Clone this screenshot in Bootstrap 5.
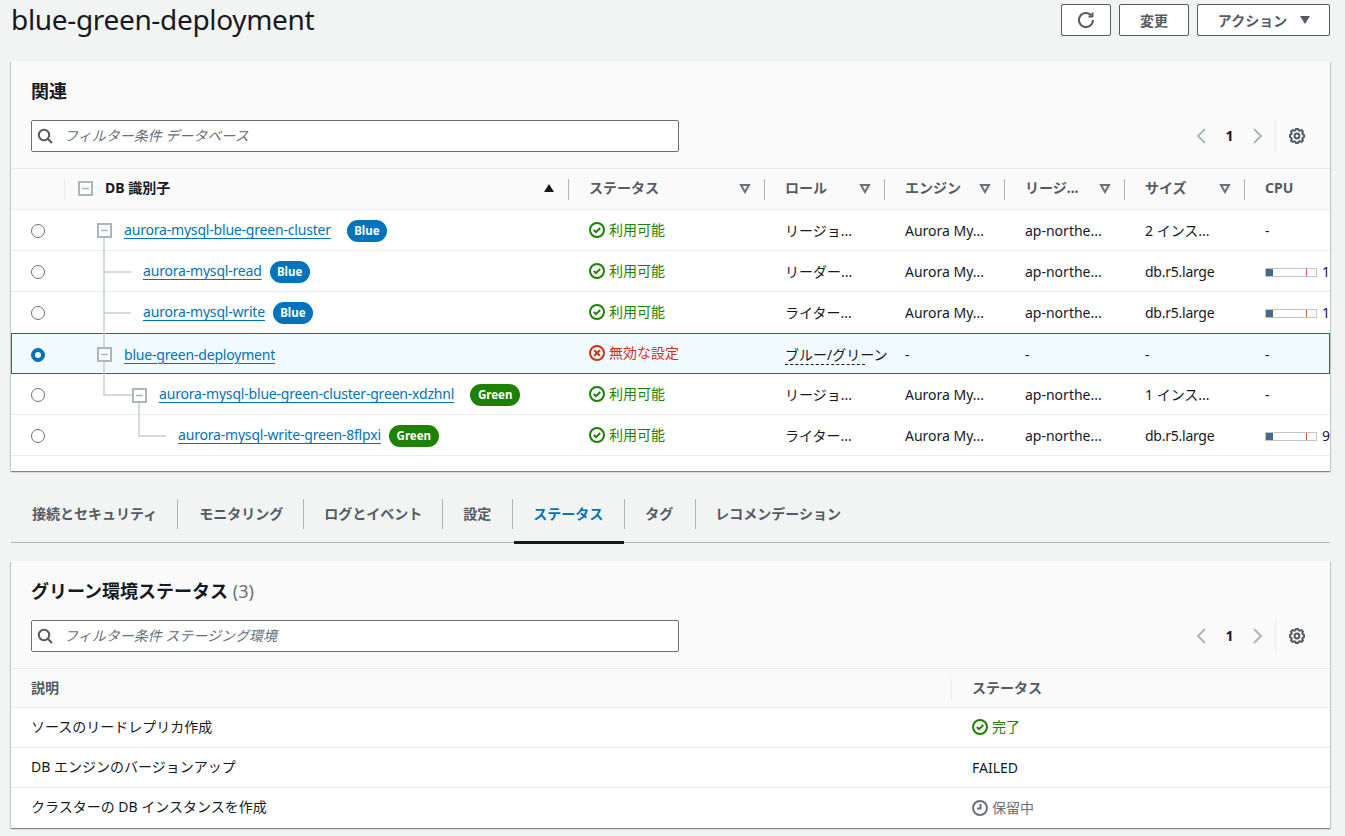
<!DOCTYPE html>
<html lang="ja">
<head>
<meta charset="utf-8">
<title>blue-green-deployment</title>
<link href="https://cdn.jsdelivr.net/npm/bootstrap@5.3.0/dist/css/bootstrap.min.css" rel="stylesheet">
<style>
:root { --ink:#16191f; --slate:#545b64; --mid:#687078; --line:#eaeded; --azure:#0073bb; --leaf:#1d8102; --fault:#d13212; }
html, body { height:836px; overflow:hidden; }
body { background:#f2f3f3; color:var(--ink); font-family:"Noto Sans","Noto Sans CJK JP",sans-serif; font-size:14px; line-height:20px; }
.shell { padding:4px 15px 0 11px; }
.page-head { height:32px; margin-bottom:25px; }
.page-title { font-size:28px; line-height:32px; font-weight:400; margin:-1px 0 0; color:var(--ink); letter-spacing:-.33px; }
.act-btn { height:32px; background:#fff; border:1px solid var(--slate); border-radius:2px; color:var(--slate); font-weight:700; font-size:14px; display:inline-flex; align-items:center; justify-content:center; gap:13px; padding:0; }
.act-btn:hover { background:#fff; color:var(--slate); border-color:var(--slate); }
.act-refresh { width:50px; }
.act-edit { width:70px; }
.act-menu { width:133px; padding-left:1px; }
.panel { border:0; border-radius:0; background:#fff; box-shadow:0 1px 1px rgba(0,28,36,.3),1px 1px 1px rgba(0,28,36,.15),-1px 1px 1px rgba(0,28,36,.15); overflow:hidden; }
.panel-top { background:#fafafa; padding:15px 20px 16px; height:107px; }
.panel-title { font-size:18px; line-height:30px; font-weight:700; margin:0 0 14px; color:var(--ink); }
.panel-count { font-weight:400; color:var(--mid); }
.filter-box { width:648px; height:32px; border:1px solid var(--mid); border-radius:2px; background:#fff; padding:0 5px; gap:11px; }
.filter-box input { border:0; outline:0; flex:1; background:transparent; padding:0; font-size:14px; font-style:italic; color:var(--ink); font-family:inherit; }
.filter-box input::placeholder { color:var(--mid); opacity:1; }
.pager { height:32px; margin-right:5px; }
.pager-num { width:39px; text-align:center; font-weight:700; }
.pager-prefs { border-left:1px solid var(--line); height:32px; margin-left:10px; padding-left:13px; }
.tree-wrap { position:relative; padding-bottom:15px; }
.tree-lines { position:absolute; left:0; top:0; pointer-events:none; }
.grid-tbl { table-layout:fixed; width:100%; margin:0; border-collapse:separate; border-spacing:0; }
.grid-tbl>:not(caption)>*>* { padding:2px 19px 0 21px; border-bottom:1px solid var(--line); box-shadow:none; background:transparent; color:var(--ink); vertical-align:middle; white-space:nowrap; overflow:hidden; height:41px; font-weight:400; }
.grid-tbl>thead>tr>th { background:#fafafa; border-top:1px solid var(--line); height:42px; font-weight:700; color:var(--slate); position:relative; padding:0 13px 2px 21px; overflow:visible; }
.grid-tbl>thead>tr>th.is-plain { overflow:hidden; }
.grid-tbl>thead>tr>th+th::before { content:""; position:absolute; left:0; top:10px; height:21px; border-left:1px solid #aab7b8; }
.grid-tbl>thead>tr>th.soft-rule::before { border-left-color:var(--line); }
.head-inner { display:flex; justify-content:space-between; align-items:center; gap:6px; }
.head-label { white-space:nowrap; }
.grid-tbl>thead>tr>th.head-sorted { color:var(--ink); padding-left:41px; padding-right:14px; }
.grid-tbl>tbody>tr.before-picked>td { border-bottom-color:transparent; }
.grid-tbl>tbody>tr.picked>td { background:#f1faff; border-top:1px solid var(--azure); border-bottom-color:var(--azure); }
.grid-tbl>tbody>tr.picked>td:first-child { border-left:1px solid var(--azure); }
.grid-tbl>tbody>tr.picked>td:last-child { border-right:1px solid var(--azure); }
.grid-tbl>tbody>tr>td.cell-radio { padding-left:20px; padding-right:0; }
.grid-tbl>tbody>tr.picked>td.cell-radio { padding-left:19px; }
.pick { width:14px; height:14px; margin:0; border:1.5px solid var(--mid); display:block; }
.pick:checked { background-color:var(--azure); border-color:var(--azure); }
.grid-tbl>tbody>tr>td.tier-a { padding-left:60px; }
.grid-tbl>tbody>tr>td.tier-b { padding-left:79px; }
.grid-tbl>tbody>tr>td.tier-c { padding-left:95px; }
.grid-tbl>tbody>tr>td.tier-d { padding-left:114px; }
.db-link { color:var(--azure); text-decoration:underline; text-underline-offset:3px; text-decoration-thickness:1px; letter-spacing:-.19px; }
.latin-tight { letter-spacing:-.25px; }
.tone { display:inline-block; height:22px; line-height:22px; border-radius:11px; color:#fff; font-size:11.5px; font-weight:700; text-align:center; vertical-align:middle; }
.tone-blue { background:var(--azure); width:40px; }
.tone-green { background:var(--leaf); width:50px; }
.state { display:inline-flex; align-items:center; gap:4px; }
.grid-tbl>tbody>tr>td .state-ok { color:var(--leaf); }
.state-ok { color:var(--leaf); }
.state-bad { color:var(--fault); }
.state-wait { color:var(--mid); }
.dash-tip { display:inline-block; position:relative; line-height:19px; padding-bottom:1px; }
.dash-tip::after { content:""; position:absolute; left:0; bottom:0; width:80px; border-bottom:1px dashed var(--ink); }
.grid-tbl>tbody>tr>td.cell-cut { padding-right:0; }
.grid-tbl>tbody>tr>td.cell-open { padding-right:0; overflow:visible; }
.cpu-wrap { display:flex; align-items:center; gap:5px; }
.cpu-meter { position:relative; flex:none; width:52px; height:9px; border:1px solid #c4c4c4; background:#fff; }
.cpu-fill { position:absolute; left:0; top:0; bottom:0; width:7px; background:#44698f; }
.cpu-mark { position:absolute; left:40px; top:0; bottom:0; width:1px; background:#e4504a; }
.tab-strip { height:46px; margin:26px 0 18px; border-bottom:1px solid #aab7b8; }
.tab-item { position:relative; height:46px; padding:0 21px 12px; display:flex; align-items:center; font-weight:700; color:var(--slate); }
.tab-item.tab-snug { padding-right:20px; }
.tab-item.tab-shift { padding-left:22px; padding-right:20px; }
.tab-item.tab-roomy { padding-right:22px; }
.tab-item.tab-end { padding-left:20px; }
.tab-item+.tab-item::before { content:""; position:absolute; left:0; top:2px; height:30px; border-left:1px solid #aab7b8; }
.tab-item.tab-on { color:var(--azure); }
.tab-item.tab-on::after { content:""; position:absolute; left:2px; right:0; bottom:-1px; height:3px; background:var(--ink); }
.status-tbl>:not(caption)>*>* { height:40px; }
.status-tbl>thead>tr>th { height:40px; padding-bottom:0; }
.status-tbl>tbody>tr>td { padding-top:0; }
.status-tbl>tbody>tr>td.cell-desc { padding:0 19px 2px 20px; }
.status-tbl>tbody>tr>td.cell-state { padding-top:2px; }
.status-tbl>thead>tr>th.cell-desc { padding-left:20px; }
.status-tbl>tbody>tr:last-child>td { border-bottom:0; height:40px; }
.status-tbl>thead>tr>th::before { top:9px; }
</style>
</head>
<body>
<div class="shell">
  <header class="page-head d-flex justify-content-between align-items-start">
    <h1 class="page-title">blue-green-deployment</h1>
    <div class="d-flex gap-2">
      <button type="button" class="btn act-btn act-refresh" aria-label="更新"><svg width="16" height="16" viewBox="0 0 16 16" fill="none" stroke="currentColor" stroke-width="2"><path d="M15 8a7 7 0 1 1-1.9-4.8"/><path d="M14.5 0.5v4h-4" stroke-linejoin="round"/></svg></button>
      <button type="button" class="btn act-btn act-edit">変更</button>
      <button type="button" class="btn act-btn act-menu">アクション<svg width="10" height="8" viewBox="0 0 10 8" fill="currentColor"><path d="M0 0h10L5 8z"/></svg></button>
    </div>
  </header>

  <section class="card panel">
    <div class="panel-top">
      <h2 class="panel-title">関連</h2>
      <div class="d-flex justify-content-between align-items-center">
        <label class="filter-box d-flex align-items-center">
          <svg width="16" height="16" viewBox="0 0 16 16" fill="none" stroke="#545b64" stroke-width="2"><circle cx="7" cy="7" r="5.2"/><path d="M10.8 10.8 15 15"/></svg>
          <input type="text" placeholder="フィルター条件 データベース">
        </label>
        <div class="pager d-flex align-items-center">
          <svg width="16" height="16" viewBox="0 0 16 16" fill="none" stroke="#aab7b8" stroke-width="2"><path d="M11 1 4 8l7 7"/></svg>
          <span class="pager-num">1</span>
          <svg width="16" height="16" viewBox="0 0 16 16" fill="none" stroke="#aab7b8" stroke-width="2"><path d="m5 1 7 7-7 7"/></svg>
          <span class="pager-prefs d-flex align-items-center"><svg width="16" height="16" viewBox="0 0 16 16" fill="none" stroke="#545b64" stroke-width="2"><path d="M13.3 5.2l.6-1.7-1.4-1.4-1.7.6c-.3-.2-.7-.3-1.1-.4L9 1H7l-.7 1.3c-.3.1-.7.2-1 .4l-1.8-.6-1.4 1.4.6 1.7c-.2.3-.3.7-.4 1L1 7v2l1.3.8c.1.4.3.7.4 1.1l-.6 1.6 1.4 1.4 1.7-.6c.3.2.7.3 1.1.4L7 15h2l.8-1.3c.4-.1.7-.3 1.1-.4l1.6.6 1.4-1.4-.6-1.6c.2-.3.3-.7.4-1.1L15 9V7l-1.3-.8c-.1-.3-.2-.7-.4-1z"/><circle cx="8" cy="8" r="2.4"/></svg></span>
        </div>
      </div>
    </div>
    <div class="tree-wrap">
      <table class="table grid-tbl">
        <colgroup><col style="width:53px"><col style="width:504px"><col style="width:196px"><col style="width:120px"><col style="width:120px"><col style="width:120px"><col style="width:120px"><col style="width:86px"></colgroup>
        <thead>
          <tr>
            <th class="is-plain"></th>
            <th class="soft-rule head-sorted"><div class="head-inner"><span class="head-label">DB 識別子</span><svg width="10" height="8" viewBox="0 0 10 8" fill="#16191f"><path d="M5 0 10 8H0z"/></svg></div></th>
            <th><div class="head-inner"><span class="head-label">ステータス</span><svg width="12" height="12" viewBox="0 0 12 12" fill="none" stroke="#687078" stroke-width="2"><path d="M2 3h8L6 10z"/></svg></div></th>
            <th><div class="head-inner"><span class="head-label">ロール</span><svg width="12" height="12" viewBox="0 0 12 12" fill="none" stroke="#687078" stroke-width="2"><path d="M2 3h8L6 10z"/></svg></div></th>
            <th><div class="head-inner"><span class="head-label">エンジン</span><svg width="12" height="12" viewBox="0 0 12 12" fill="none" stroke="#687078" stroke-width="2"><path d="M2 3h8L6 10z"/></svg></div></th>
            <th><div class="head-inner"><span class="head-label">リージ...</span><svg width="12" height="12" viewBox="0 0 12 12" fill="none" stroke="#687078" stroke-width="2"><path d="M2 3h8L6 10z"/></svg></div></th>
            <th><div class="head-inner"><span class="head-label">サイズ</span><svg width="12" height="12" viewBox="0 0 12 12" fill="none" stroke="#687078" stroke-width="2"><path d="M2 3h8L6 10z"/></svg></div></th>
            <th class="is-plain">CPU</th>
          </tr>
        </thead>
        <tbody>
          <tr>
            <td class="cell-radio"><input class="form-check-input pick" type="radio" name="db"></td>
            <td class="tier-a"><a class="db-link" href="#">aurora-mysql-blue-green-cluster</a><span class="tone tone-blue ms-3">Blue</span></td>
            <td><span class="state state-ok"><svg width="16" height="16" viewBox="0 0 16 16" fill="none" stroke="currentColor" stroke-width="2"><circle cx="8" cy="8" r="7"/><path d="m4.8 8 2.2 2.2L11.2 6"/></svg>利用可能</span></td>
            <td>リージョ...</td><td>Aurora My...</td><td>ap-northe...</td><td>2 インス...</td><td>-</td>
          </tr>
          <tr>
            <td class="cell-radio"><input class="form-check-input pick" type="radio" name="db"></td>
            <td class="tier-b"><a class="db-link" href="#">aurora-mysql-read</a><span class="tone tone-blue ms-2">Blue</span></td>
            <td><span class="state state-ok"><svg width="16" height="16" viewBox="0 0 16 16" fill="none" stroke="currentColor" stroke-width="2"><circle cx="8" cy="8" r="7"/><path d="m4.8 8 2.2 2.2L11.2 6"/></svg>利用可能</span></td>
            <td>リーダー...</td><td>Aurora My...</td><td>ap-northe...</td><td class="latin-tight">db.r5.large</td>
            <td class="cell-cut"><div class="cpu-wrap"><span class="cpu-meter"><span class="cpu-fill"></span><span class="cpu-mark"></span></span>1</div></td>
          </tr>
          <tr class="before-picked">
            <td class="cell-radio"><input class="form-check-input pick" type="radio" name="db"></td>
            <td class="tier-b"><a class="db-link" href="#">aurora-mysql-write</a><span class="tone tone-blue ms-2">Blue</span></td>
            <td><span class="state state-ok"><svg width="16" height="16" viewBox="0 0 16 16" fill="none" stroke="currentColor" stroke-width="2"><circle cx="8" cy="8" r="7"/><path d="m4.8 8 2.2 2.2L11.2 6"/></svg>利用可能</span></td>
            <td>ライター...</td><td>Aurora My...</td><td>ap-northe...</td><td class="latin-tight">db.r5.large</td>
            <td class="cell-cut"><div class="cpu-wrap"><span class="cpu-meter"><span class="cpu-fill"></span><span class="cpu-mark"></span></span>1</div></td>
          </tr>
          <tr class="picked">
            <td class="cell-radio"><input class="form-check-input pick" type="radio" name="db" checked></td>
            <td class="tier-a"><a class="db-link" href="#">blue-green-deployment</a></td>
            <td><span class="state state-bad"><svg width="16" height="16" viewBox="0 0 16 16" fill="none" stroke="currentColor" stroke-width="2"><circle cx="8" cy="8" r="7"/><path d="m5.2 5.2 5.6 5.6M10.8 5.2l-5.6 5.6"/></svg>無効な設定</span></td>
            <td class="cell-open"><span class="dash-tip">ブルー/グリーン</span></td><td>-</td><td>-</td><td>-</td><td>-</td>
          </tr>
          <tr>
            <td class="cell-radio"><input class="form-check-input pick" type="radio" name="db"></td>
            <td class="tier-c"><a class="db-link" href="#">aurora-mysql-blue-green-cluster-green-xdzhnl</a><span class="tone tone-green ms-3">Green</span></td>
            <td><span class="state state-ok"><svg width="16" height="16" viewBox="0 0 16 16" fill="none" stroke="currentColor" stroke-width="2"><circle cx="8" cy="8" r="7"/><path d="m4.8 8 2.2 2.2L11.2 6"/></svg>利用可能</span></td>
            <td>リージョ...</td><td>Aurora My...</td><td>ap-northe...</td><td>1 インス...</td><td>-</td>
          </tr>
          <tr>
            <td class="cell-radio"><input class="form-check-input pick" type="radio" name="db"></td>
            <td class="tier-d"><a class="db-link" href="#">aurora-mysql-write-green-8flpxi</a><span class="tone tone-green ms-2">Green</span></td>
            <td><span class="state state-ok"><svg width="16" height="16" viewBox="0 0 16 16" fill="none" stroke="currentColor" stroke-width="2"><circle cx="8" cy="8" r="7"/><path d="m4.8 8 2.2 2.2L11.2 6"/></svg>利用可能</span></td>
            <td>ライター...</td><td>Aurora My...</td><td>ap-northe...</td><td class="latin-tight">db.r5.large</td>
            <td class="cell-cut"><div class="cpu-wrap"><span class="cpu-meter"><span class="cpu-fill"></span><span class="cpu-mark"></span></span>9</div></td>
          </tr>
        </tbody>
      </table>
      <svg class="tree-lines" width="160" height="300" viewBox="11 168 160 300" fill="none" stroke="#c6cfcf" stroke-width="1.5">
        <path d="M104 237V395H132M104 272H131M104 313H131M139 402V436H166"/>
        <g fill="#fff" stroke="#aab7b8" stroke-width="2">
          <rect x="79" y="182" width="13" height="13"/>
          <rect x="98" y="224" width="13" height="13"/>
          <rect x="98" y="348" width="13" height="13"/>
          <rect x="133" y="389" width="13" height="13"/>
        </g>
        <path stroke="#aab7b8" stroke-width="1.5" d="M82 188.5H89M101 230.5H108M101 354.5H108M136 395.5H143"/>
      </svg>
    </div>
  </section>

  <nav class="tab-strip d-flex">
    <div class="tab-item tab-snug">接続とセキュリティ</div>
    <div class="tab-item tab-shift">モニタリング</div>
    <div class="tab-item tab-snug">ログとイベント</div>
    <div class="tab-item">設定</div>
    <div class="tab-item tab-on">ステータス</div>
    <div class="tab-item tab-roomy">タグ</div>
    <div class="tab-item tab-end">レコメンデーション</div>
  </nav>

  <section class="card panel">
    <div class="panel-top">
      <h2 class="panel-title">グリーン環境ステータス <span class="panel-count">(3)</span></h2>
      <div class="d-flex justify-content-between align-items-center">
        <label class="filter-box d-flex align-items-center">
          <svg width="16" height="16" viewBox="0 0 16 16" fill="none" stroke="#545b64" stroke-width="2"><circle cx="7" cy="7" r="5.2"/><path d="M10.8 10.8 15 15"/></svg>
          <input type="text" placeholder="フィルター条件 ステージング環境">
        </label>
        <div class="pager d-flex align-items-center">
          <svg width="16" height="16" viewBox="0 0 16 16" fill="none" stroke="#aab7b8" stroke-width="2"><path d="M11 1 4 8l7 7"/></svg>
          <span class="pager-num">1</span>
          <svg width="16" height="16" viewBox="0 0 16 16" fill="none" stroke="#aab7b8" stroke-width="2"><path d="m5 1 7 7-7 7"/></svg>
          <span class="pager-prefs d-flex align-items-center"><svg width="16" height="16" viewBox="0 0 16 16" fill="none" stroke="#545b64" stroke-width="2"><path d="M13.3 5.2l.6-1.7-1.4-1.4-1.7.6c-.3-.2-.7-.3-1.1-.4L9 1H7l-.7 1.3c-.3.1-.7.2-1 .4l-1.8-.6-1.4 1.4.6 1.7c-.2.3-.3.7-.4 1L1 7v2l1.3.8c.1.4.3.7.4 1.1l-.6 1.6 1.4 1.4 1.7-.6c.3.2.7.3 1.1.4L7 15h2l.8-1.3c.4-.1.7-.3 1.1-.4l1.6.6 1.4-1.4-.6-1.6c.2-.3.3-.7.4-1.1L15 9V7l-1.3-.8c-.1-.3-.2-.7-.4-1z"/><circle cx="8" cy="8" r="2.4"/></svg></span>
        </div>
      </div>
    </div>
    <table class="table grid-tbl status-tbl">
      <colgroup><col style="width:940px"><col></colgroup>
      <thead><tr><th class="cell-desc">説明</th><th class="soft-rule">ステータス</th></tr></thead>
      <tbody>
        <tr><td class="cell-desc">ソースのリードレプリカ作成</td><td class="cell-state"><span class="state state-ok"><svg width="16" height="16" viewBox="0 0 16 16" fill="none" stroke="currentColor" stroke-width="2"><circle cx="8" cy="8" r="7"/><path d="m4.8 8 2.2 2.2L11.2 6"/></svg>完了</span></td></tr>
        <tr><td class="cell-desc">DB エンジンのバージョンアップ</td><td>FAILED</td></tr>
        <tr><td class="cell-desc">クラスターの DB インスタンスを作成</td><td class="cell-state"><span class="state state-wait"><svg width="16" height="16" viewBox="0 0 16 16" fill="none" stroke="currentColor" stroke-width="2"><circle cx="8" cy="8" r="7"/><path d="M8.5 4v4.5H5"/></svg>保留中</span></td></tr>
      </tbody>
    </table>
  </section>
</div>
</body>
</html>
